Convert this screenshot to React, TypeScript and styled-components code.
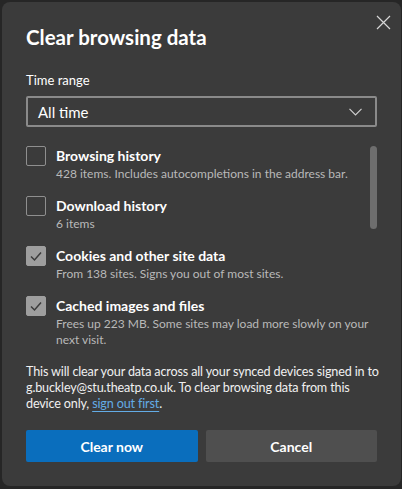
import React from 'react';
import styled, { createGlobalStyle } from 'styled-components';

const font = `Lato, "Noto Sans", sans-serif`;

const GlobalStyle = createGlobalStyle`
  html, body {
    margin: 0;
    padding: 0;
    background: #262626;
    font-family: ${font};
  }
`;

const Page = styled.div`
  width: 402px;
  height: 489px;
  padding: 2px 0 0 2px;
  box-sizing: border-box;
  overflow: hidden;
`;

const Dialog = styled.div`
  position: relative;
  width: 399px;
  height: 484px;
  box-sizing: border-box;
  padding: 21px 24px 24px 24px;
  background: #3b3b3b;
  border-radius: 8px;
  display: flex;
  flex-direction: column;
  color: #ffffff;
`;

const CloseButton = styled.button`
  position: absolute;
  top: 9px;
  right: 7px;
  width: 22px;
  height: 22px;
  padding: 0;
  border: none;
  background: transparent;
  display: flex;
  align-items: center;
  justify-content: center;
`;

const Title = styled.h1`
  margin: 0;
  font-size: 20.5px;
  line-height: 28px;
  font-weight: 700;
`;

const Label = styled.div`
  margin-top: 19px;
  font-size: 13px;
  line-height: 20px;
  color: #ffffff;
`;

const Select = styled.div`
  margin-top: 6px;
  height: 31px;
  box-sizing: border-box;
  border: 2px solid #8a8a8a;
  border-radius: 2px;
  display: flex;
  align-items: center;
  justify-content: space-between;
  padding: 0 13px 0 10px;
  font-size: 15px;
`;

const ListArea = styled.div`
  position: relative;
  margin-top: 19px;
  display: flex;
  flex-direction: column;
  gap: 14px;
  padding-right: 6px;
`;

const Thumb = styled.div`
  position: absolute;
  top: 0;
  right: 0;
  width: 7px;
  height: 83px;
  border-radius: 4px;
  background: #6e6e6e;
`;

const Row = styled.div`
  display: flex;
  gap: 10px;
  align-items: flex-start;
`;

const Box = styled.div<{ checked?: boolean }>`
  flex: none;
  width: 20px;
  height: 20px;
  box-sizing: border-box;
  border-radius: 2px;
  border: 1px solid ${p => (p.checked ? '#9e9e9e' : '#8f8f8f')};
  background: ${p => (p.checked ? '#9e9e9e' : 'transparent')};
  display: flex;
  align-items: center;
  justify-content: center;
`;

const RowText = styled.div`
  display: flex;
  flex-direction: column;
`;

const RowTitle = styled.div`
  font-size: 14px;
  line-height: 20px;
  font-weight: 700;
`;

const RowSub = styled.div`
  font-size: 12px;
  line-height: 16px;
  color: #b9b9b9;
`;

const Info = styled.p`
  margin: 16px 0 0 0;
  font-size: 12.6px;
  letter-spacing: -0.15px;
  line-height: 16px;
  color: #f0f0f0;
  white-space: nowrap;
`;

const Link = styled.a`
  color: #63ace6;
  text-decoration: underline;
  text-underline-offset: 3px;
`;

const Buttons = styled.div`
  margin-top: auto;
  display: grid;
  grid-template-columns: 1fr 1fr;
  gap: 8px;
`;

const Button = styled.button<{ primary?: boolean }>`
  height: 32px;
  border: none;
  border-radius: 2px;
  background: ${p => (p.primary ? '#0a6ebd' : '#4f4f4f')};
  color: #ffffff;
  font-family: ${font};
  font-size: 14px;
  font-weight: 700;
`;

const items = [
  { title: 'Browsing history', sub: '428 items. Includes autocompletions in the address bar.', checked: false },
  { title: 'Download history', sub: '6 items', checked: false },
  { title: 'Cookies and other site data', sub: 'From 138 sites. Signs you out of most sites.', checked: true },
  { title: 'Cached images and files', sub: 'Frees up 223 MB. Some sites may load more slowly on your next visit.', checked: true },
];

export default function App() {
  return (
    <>
      <GlobalStyle />
      <Page>
        <Dialog>
          <CloseButton aria-label="Close">
            <svg width="15" height="15" viewBox="0 0 15 15">
              <path d="M1 1 L14 14 M14 1 L1 14" stroke="#d6d6d6" strokeWidth="1.2" fill="none" />
            </svg>
          </CloseButton>
          <Title>Clear browsing data</Title>
          <Label>Time range</Label>
          <Select>
            <span>All time</span>
            <svg width="13" height="8" viewBox="0 0 13 8">
              <path d="M0.5 0.8 L6.5 6.8 L12.5 0.8" stroke="#cfcfcf" strokeWidth="1.2" fill="none" />
            </svg>
          </Select>
          <ListArea>
            <Thumb />
            {items.map(x => (
              <Row key={x.title}>
                <Box checked={x.checked}>
                  {x.checked && (
                    <svg width="14" height="14" viewBox="0 0 14 14">
                      <path d="M2 7.5 L5.5 11 L12 3.5" stroke="#3b3b3b" strokeWidth="1.5" fill="none" />
                    </svg>
                  )}
                </Box>
                <RowText>
                  <RowTitle>{x.title}</RowTitle>
                  <RowSub>{x.sub}</RowSub>
                </RowText>
              </Row>
            ))}
          </ListArea>
          <Info>
            This will clear your data across all your synced devices signed in to
            <br />
            g.buckley@stu.theatp.co.uk. To clear browsing data from this
            <br />
            device only, <Link>sign out first</Link>.
          </Info>
          <Buttons>
            <Button primary>Clear now</Button>
            <Button>Cancel</Button>
          </Buttons>
        </Dialog>
      </Page>
    </>
  );
}
